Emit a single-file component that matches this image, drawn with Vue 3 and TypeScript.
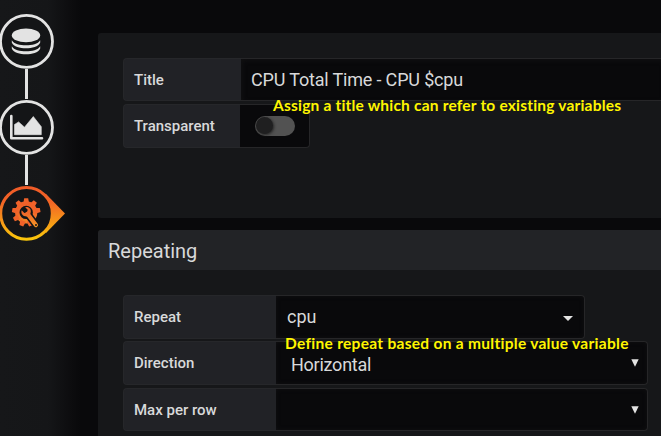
<script setup lang="ts">
import { ref } from 'vue'

const title = ref('CPU Total Time - CPU $cpu')
const transparent = ref(false)

interface Option {
  label: string
  value: string
  kind: 'menu' | 'select'
  note?: string
}

const options: Option[] = [
  { label: 'Repeat', value: 'cpu', kind: 'menu' },
  { label: 'Direction', value: 'Horizontal', kind: 'select', note: 'Define repeat based on a multiple value variable' },
  { label: 'Max per row', value: '', kind: 'select' },
]

const teeth = [0, 40, 80, 160, 200, 240, 280, 320]
</script>

<template>
  <div class="editor">
    <nav class="steps">
      <svg class="step" viewBox="0 0 68 56" aria-label="Queries">
        <circle cx="26.5" cy="28.400" r="26" class="ring" />
        <g fill="#e3e3e3">
          <ellipse cx="26" cy="22.400" rx="14.2" ry="6.8" />
          <path d="M11.8 27.2 C14 31 20 32.2 26 32.2 S38 31 40.200 27.200 V29.500 C38.500 33.800 32 35.200 26 35.200 S13.500 33.800 11.800 29.500 Z" />
          <path d="M11.8 33.200 C14 37 20 38.200 26 38.200 S38 37 40.200 33.200 V35.500 C38.500 39.800 32 41.200 26 41.200 S13.500 39.800 11.800 35.500 Z" />
        </g>
      </svg>
      <span class="link"></span>
      <svg class="step" viewBox="0 0 68 56" aria-label="Visualization">
        <circle cx="26.5" cy="28.400" r="26" class="ring" />
        <path d="M11.300 17 V39.200 H42" fill="none" stroke="#e3e3e3" stroke-width="2.600" stroke-linecap="round" stroke-linejoin="round" />
        <path d="M14.500 35.700 V25.500 L18.600 22.900 L24.500 28.200 L33.300 17.500 L41.300 27.700 V35.700 Z" fill="#e3e3e3" stroke="#e3e3e3" stroke-width=".6" stroke-linejoin="round" />
      </svg>
      <span class="link"></span>
      <svg class="step" viewBox="0 0 68 56" aria-label="General">
        <defs>
          <linearGradient id="flame" gradientUnits="userSpaceOnUse" x1="0" y1="0" x2="0" y2="56">
            <stop offset="0" stop-color="#f05a28" />
            <stop offset=".3" stop-color="#f26426" />
            <stop offset="1" stop-color="#fbca0a" />
          </linearGradient>
          <linearGradient id="gear" gradientUnits="userSpaceOnUse" x1="0" y1="13" x2="0" y2="43">
            <stop offset="0" stop-color="#f05a28" />
            <stop offset=".5" stop-color="#f2692a" />
            <stop offset="1" stop-color="#f59a25" />
          </linearGradient>
        </defs>
        <path d="M46 8.900 L65 28.400 L46 47.900 Z" fill="url(#flame)" />
        <circle cx="26.500" cy="28.400" r="25.800" fill="#141517" stroke="url(#flame)" stroke-width="3" />
        <circle cx="26.200" cy="27.400" r="8.900" fill="none" stroke="url(#gear)" stroke-width="4.400" />
        <path v-for="t in teeth" :key="t" d="M24.200 13.200 H28.200 L29.100 18.500 H23.300 Z" fill="#f1622a" :transform="`rotate(${t} 26.200 27.400)`" />
        <g stroke-linecap="round" fill="none">
          <path d="M28 29.500 L36 40" stroke="#141517" stroke-width="7.400" />
          <path d="M27.500 28.700 L35.900 40" stroke="url(#gear)" stroke-width="4.200" />
        </g>
        <path d="M25.200 22.300 C28.500 21.300 31 23.800 30.800 26.700 C30.700 29.900 28 32 25.100 31.300 C22.200 30.700 20.700 27.900 21.700 25.300 L24.300 28 L27 27.300 L27.700 24.700 Z" fill="url(#gear)" />
        <circle cx="36" cy="40" r="1" fill="#141517" />
      </svg>
    </nav>

    <main class="content">
      <section class="panel general">
        <div class="row title-row">
          <label class="label short">Title</label>
          <div class="field title-field">{{ title }}</div>
        </div>
        <div class="row toggle-row">
          <label class="label short">Transparent</label>
          <div class="field toggle-field" @click="transparent = !transparent">
            <span class="switch" :class="{ on: transparent }"><i></i></span>
          </div>
          <span class="note title-note">Assign a title which can refer to existing variables</span>
        </div>
      </section>

      <section class="panel repeating">
        <header>Repeating</header>
        <div class="rows">
          <div v-for="option in options" :key="option.label" class="row" :class="option.kind">
            <label class="label">{{ option.label }}</label>
            <div class="field choice">
              <span>{{ option.value }}</span>
              <svg v-if="option.kind === 'menu'" class="caret" viewBox="0 0 10 5"><path d="M0 0 H10 L5 5 Z" /></svg>
              <svg v-else class="arrow" viewBox="0 0 8 8"><path d="M.3 .3 H7.700 L4 7.700 Z" /></svg>
            </div>
            <span v-if="option.note" class="note repeat-note">{{ option.note }}</span>
          </div>
        </div>
      </section>
    </main>
  </div>
</template>

<style>
body { margin: 0; background: #09090b; overflow: hidden; }
</style>

<style scoped>
* { box-sizing: border-box; }
.editor {
  display: flex;
  width: 661px;
  height: 436px;
  overflow: hidden;
  background: #09090b;
  color: #d8d9da;
  font-family: Roboto, "Liberation Sans", sans-serif;
}
.steps {
  display: flex;
  flex-direction: column;
  flex: 0 0 80px;
  padding-top: 13px;
  background: linear-gradient(90deg, #161719 0, #151618 48px, #0c0c0e 72px, #09090b 80px);
}
.step { flex: none; width: 68px; height: 56px; overflow: visible; }
.ring { fill: #141517; stroke: #e3e3e3; stroke-width: 2.8; }
.link { flex: 0 0 30px; width: 3px; margin-left: 25px; background: #e3e3e3; }
.content {
  display: flex;
  flex-direction: column;
  flex: none;
  gap: 12px;
  width: 583px;
  padding: 33px 0 0 18px;
}
.panel { flex: none; border-radius: 3px 0 0 3px; background: #161719; overflow: hidden; }
.general { height: 185px; padding: 25px 0 0 25px; }
.repeating { height: 220px; }
header {
  height: 40px;
  padding-left: 10px;
  background: #222326;
  font-size: 20px;
  line-height: 42px;
}
.rows { padding: 25px 0 0 25px; }
.row { position: relative; display: flex; height: 44px; }
.label {
  flex: 0 0 153px;
  padding-left: 10px;
  border: 1px solid #26272a;
  border-right: 0;
  border-radius: 4px 0 0 4px;
  background: #212226;
  font-size: 15px;
  font-weight: 500;
  line-height: 42px;
}
.label.short { flex-basis: 117px; }
.field {
  border: 1px solid #262628;
  border-left: 0;
  background: #09090b;
  font-size: 18px;
  letter-spacing: -.17px;
  white-space: nowrap;
}
.title-row { height: 43px; margin-bottom: 3px; }
.title-row .label { flex-basis: 118px; }
.title-field { flex: 1; padding-left: 10px; line-height: 42px; box-shadow: inset 2px 2px 4px #101012; }
.toggle-field { display: flex; align-items: center; width: 70px; padding-left: 15px; border-radius: 0 4px 4px 0; }
.switch { width: 40px; height: 20px; padding: 1px; border-radius: 10px; background: #525252; }
.switch i { display: block; width: 17px; height: 17px; border-radius: 50%; background: #1f1f20; box-shadow: 1px 1px 3px #222; }
.switch.on i { margin-left: 21px; }
.choice { display: flex; flex: 1; align-items: center; justify-content: space-between; padding: 0 9px 0 11px; border-radius: 0 4px 4px 0; box-shadow: inset 0 0 4px #111113; }
.menu { width: 462px; margin-bottom: 2px; }
.select { width: 525px; margin-bottom: 3px; }
.select .choice { padding: 3px 8px 0 15px; letter-spacing: -.25px; }
.select:last-child { height: 43px; }
.caret { width: 10px; height: 5px; margin: 3px 2px 0 0; fill: #e3e3e3; }
.menu .choice { padding: 0 9px 1px 11px; letter-spacing: 0; }
.arrow { width: 8px; height: 8px; margin-top: -3px; fill: #e3e3e3; }
.note {
  position: absolute;
  z-index: 1;
  color: #fff600;
  font-family: Lato, "Open Sans", sans-serif;
  font-size: 15.5px;
  font-weight: 700;
  font-variant-ligatures: none;
  letter-spacing: .2px;
  line-height: 18px;
  white-space: nowrap;
}
.title-note { left: 150px; top: -8px; }
.repeat-note { left: 162px; top: -7px; letter-spacing: .29px; }
</style>
